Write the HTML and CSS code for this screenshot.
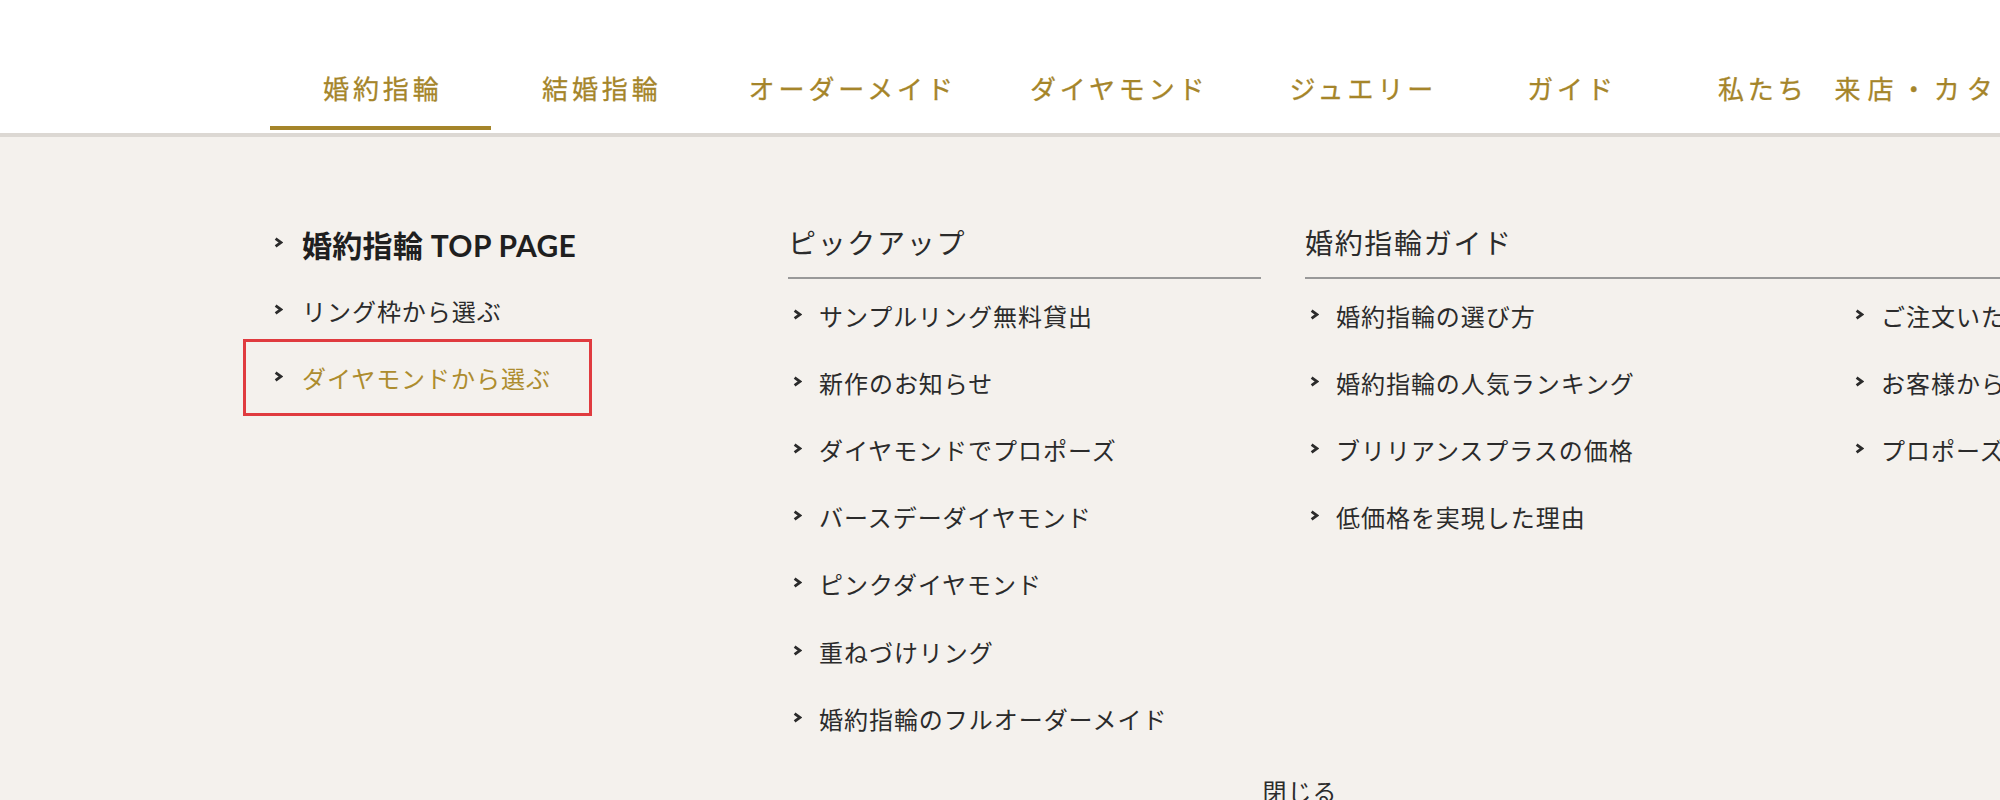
FILE: index.html
```html
<!DOCTYPE html>
<html lang="ja">
<head>
<meta charset="utf-8">
<title>婚約指輪 メニュー</title>
<link rel="stylesheet" href="styles.css">
</head>
<body>
<header class="site-header">
  <nav class="gnav">
    <ul class="gnav-list">
      <li class="gnav-item is-active">婚約指輪</li>
      <li class="gnav-item">結婚指輪</li>
      <li class="gnav-item">オーダーメイド</li>
      <li class="gnav-item">ダイヤモンド</li>
      <li class="gnav-item">ジュエリー</li>
      <li class="gnav-item">ガイド</li>
      <li class="gnav-item">私たち</li>
      <li class="gnav-item">来店・カタログ請求</li>
    </ul>
  </nav>
</header>
<section class="mega">
  <div class="mega-inner">
    <div class="mega-grid">
      <div class="mega-col">
        <ul class="links links-main">
          <li class="link link-top"><svg class="chev" viewBox="0 0 9 11" width="9" height="11"><path d="M1.6 1.6 L7 5.5 L1.6 9.4"/></svg><span>婚約指輪 TOP PAGE</span></li>
          <li class="link"><svg class="chev" viewBox="0 0 9 11" width="9" height="11"><path d="M1.6 1.6 L7 5.5 L1.6 9.4"/></svg><span>リング枠から選ぶ</span></li>
          <li class="link is-current is-marked"><svg class="chev" viewBox="0 0 9 11" width="9" height="11"><path d="M1.6 1.6 L7 5.5 L1.6 9.4"/></svg><span>ダイヤモンドから選ぶ</span></li>
        </ul>
      </div>
      <div class="mega-col">
        <h3 class="mega-title">ピックアップ</h3>
        <ul class="links links-sub">
          <li class="link"><svg class="chev" viewBox="0 0 9 11" width="9" height="11"><path d="M1.6 1.6 L7 5.5 L1.6 9.4"/></svg><span>サンプルリング無料貸出</span></li>
          <li class="link"><svg class="chev" viewBox="0 0 9 11" width="9" height="11"><path d="M1.6 1.6 L7 5.5 L1.6 9.4"/></svg><span>新作のお知らせ</span></li>
          <li class="link"><svg class="chev" viewBox="0 0 9 11" width="9" height="11"><path d="M1.6 1.6 L7 5.5 L1.6 9.4"/></svg><span>ダイヤモンドでプロポーズ</span></li>
          <li class="link"><svg class="chev" viewBox="0 0 9 11" width="9" height="11"><path d="M1.6 1.6 L7 5.5 L1.6 9.4"/></svg><span>バースデーダイヤモンド</span></li>
          <li class="link"><svg class="chev" viewBox="0 0 9 11" width="9" height="11"><path d="M1.6 1.6 L7 5.5 L1.6 9.4"/></svg><span>ピンクダイヤモンド</span></li>
          <li class="link"><svg class="chev" viewBox="0 0 9 11" width="9" height="11"><path d="M1.6 1.6 L7 5.5 L1.6 9.4"/></svg><span>重ねづけリング</span></li>
          <li class="link"><svg class="chev" viewBox="0 0 9 11" width="9" height="11"><path d="M1.6 1.6 L7 5.5 L1.6 9.4"/></svg><span>婚約指輪のフルオーダーメイド</span></li>
        </ul>
      </div>
      <div class="mega-col">
        <h3 class="mega-title">婚約指輪ガイド</h3>
        <div class="links-split">
          <ul class="links links-sub links-half">
            <li class="link"><svg class="chev" viewBox="0 0 9 11" width="9" height="11"><path d="M1.6 1.6 L7 5.5 L1.6 9.4"/></svg><span>婚約指輪の選び方</span></li>
            <li class="link"><svg class="chev" viewBox="0 0 9 11" width="9" height="11"><path d="M1.6 1.6 L7 5.5 L1.6 9.4"/></svg><span>婚約指輪の人気ランキング</span></li>
            <li class="link"><svg class="chev" viewBox="0 0 9 11" width="9" height="11"><path d="M1.6 1.6 L7 5.5 L1.6 9.4"/></svg><span>ブリリアンスプラスの価格</span></li>
            <li class="link"><svg class="chev" viewBox="0 0 9 11" width="9" height="11"><path d="M1.6 1.6 L7 5.5 L1.6 9.4"/></svg><span>低価格を実現した理由</span></li>
          </ul>
          <ul class="links links-sub links-half">
            <li class="link"><svg class="chev" viewBox="0 0 9 11" width="9" height="11"><path d="M1.6 1.6 L7 5.5 L1.6 9.4"/></svg><span>ご注文いただいたお客様の声</span></li>
            <li class="link"><svg class="chev" viewBox="0 0 9 11" width="9" height="11"><path d="M1.6 1.6 L7 5.5 L1.6 9.4"/></svg><span>お客様からのメッセージ</span></li>
            <li class="link"><svg class="chev" viewBox="0 0 9 11" width="9" height="11"><path d="M1.6 1.6 L7 5.5 L1.6 9.4"/></svg><span>プロポーズ体験談</span></li>
          </ul>
        </div>
      </div>
    </div>
    <div class="mega-close">閉じる</div>
  </div>
</section>
</body>
</html>
```

FILE: styles.css
```css
html, body {
  margin: 0;
  padding: 0;
}

body {
  width: 2000px;
  height: 800px;
  overflow: hidden;
  background: #f4f1ed;
  font-family: "Lato", "Noto Sans CJK JP", sans-serif;
  color: #2b2b2b;
}

ul {
  list-style: none;
  margin: 0;
  padding: 0;
}

/* ---------- global nav ---------- */
.site-header {
  background: #ffffff;
  height: 133px;
  border-bottom: 4px solid #dcd8d3;
  box-sizing: content-box;
}

.gnav {
  padding-top: 69px;
  padding-left: 270px;
}

.gnav-list {
  display: flex;
  white-space: nowrap;
}

.gnav-item {
  font-size: 26px;
  line-height: 40px;
  letter-spacing: 0.15em;
  color: #a5852a;
  padding-bottom: 17px;
  border-bottom: 4px solid transparent;
  flex: none;
  -webkit-text-stroke: 0.3px #a5852a;
}

.gnav-item.is-active {
  width: 221px;
  box-sizing: border-box;
  padding-left: 53px;
  border-bottom-color: #a5852a;
}

.gnav-item:nth-child(2) { margin-left: 51px; }
.gnav-item:nth-child(3) { margin-left: 87px; }
.gnav-item:nth-child(4) { margin-left: 73px; }
.gnav-item:nth-child(5) { margin-left: 81px; }
.gnav-item:nth-child(6) { margin-left: 90px; }
.gnav-item:nth-child(7) { margin-left: 101px; }
.gnav-item:nth-child(8) {
  margin-left: 27px;
  letter-spacing: 0.27em;
}

/* ---------- mega menu ---------- */
.mega {
  background: #f4f1ed;
}

.mega-inner {
  width: 2052px;
  margin-left: 274px;
  padding-top: 73px;
}

.mega-grid {
  display: grid;
  grid-template-columns: 470px 473px 1021px;
  column-gap: 44px;
}

.mega-title {
  margin: 0;
  font-size: 28px;
  font-weight: 400;
  letter-spacing: 0.06em;
  line-height: 67px;
  color: #2b2b2b;
  border-bottom: 2px solid #999999;
  white-space: nowrap;
}

.links-sub {
  padding-top: 3px;
  padding-left: 5px;
}

.links-split {
  display: flex;
}

.links-half {
  width: 546px;
  flex: none;
  box-sizing: border-box;
}

.links-half + .links-half {
  padding-left: 4px;
}

.link {
  display: flex;
  align-items: center;
  height: 67.1px;
  font-size: 24px;
  letter-spacing: 0.04em;
  color: #2b2b2b;
  white-space: nowrap;
}

.links-main .link {
  height: 67px;
}

.chev {
  flex: none;
  width: 9px;
  height: 11px;
  margin-right: 17px;
  margin-top: -2px;
  fill: none;
  stroke: #2b2b2b;
  stroke-width: 2.8;
}

.links-main .chev {
  margin-right: 19px;
}

.link-top {
  font-size: 30px;
  font-weight: 700;
  letter-spacing: 0.01em;
  color: #1f1f1f;
}

.link.is-current {
  color: #ad8c2e;
}

.link.is-marked {
  position: relative;
}

.link.is-marked::after {
  content: "";
  position: absolute;
  left: -31px;
  top: -5px;
  bottom: -5px;
  width: 349px;
  box-sizing: border-box;
  border: 3px solid #e03b3f;
  pointer-events: none;
}

.mega-close {
  text-align: center;
  font-size: 24px;
  letter-spacing: 0.04em;
  line-height: 40px;
  margin-top: 20px;
  color: #2b2b2b;
}
```
